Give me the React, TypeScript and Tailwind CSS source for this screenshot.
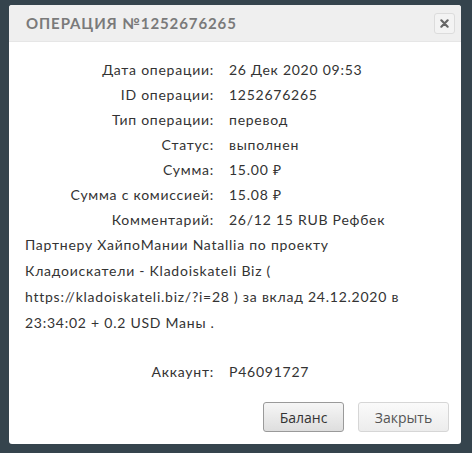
import React from 'react';

const rows: [string, string][] = [
  ['Дата операции:', '26 Дек 2020 09:53'],
  ['ID операции:', '1252676265'],
  ['Тип операции:', 'перевод'],
  ['Статус:', 'выполнен'],
  ['Сумма:', '15.00 ₽'],
  ['Сумма с комиссией:', '15.08 ₽'],
  ['Комментарий:', '26/12 15 RUB Рефбек'],
];

const App: React.FC = () => {
  return (
    <div className="w-[472px] h-[453px] bg-[#35444d] pt-[5px] pl-[9px] font-['Lato','Open_Sans',sans-serif]">
      <div className="w-[452px] h-[439px] bg-white rounded-[3px] flex flex-col overflow-hidden">
        {/* header */}
        <div className="h-[37px] bg-[#efefef] flex items-center justify-between pl-[17px] pr-[6px] border-b border-[#e6e6e6]">
          <h2 className="text-[15px] font-bold tracking-[0.9px] text-[#7a7a7a]">ОПЕРАЦИЯ №1252676265</h2>
          <button className="w-[21px] h-[21px] rounded-[3px] border border-[#dcdcdc] bg-[#f3f3f3] flex items-center justify-center">
            <svg width="9" height="9" viewBox="0 0 10 10">
              <path d="M1.5 1.5L8.5 8.5M8.5 1.5L1.5 8.5" stroke="#666" strokeWidth="2.4" strokeLinecap="round" />
            </svg>
          </button>
        </div>

        {/* details */}
        <div className="flex flex-col pt-[15px] text-[14px] tracking-[0.75px] text-[#333]">
          {rows.map(([label, value]) => (
            <div key={label} className="flex h-[25px] items-center">
              <div className="w-[205px] text-right">{label}</div>
              <div className="pl-[15px]">{value}</div>
            </div>
          ))}
          <p className="px-[16px] leading-[26px] whitespace-nowrap">
            Партнеру ХайпоМании Natallia по проекту
            <br />
            Кладоискатели - Kladoiskateli Biz (
            <br />
            https://kladoiskateli.biz/?i=28 ) за вклад 24.12.2020 в
            <br />
            23:34:02 + 0.2 USD Маны .
          </p>
          <div className="flex h-[25px] items-center mt-[23px]">
            <div className="w-[205px] text-right">Аккаунт:</div>
            <div className="pl-[15px]">P46091727</div>
          </div>
        </div>

        {/* footer */}
        <div className="flex justify-end gap-[14px] pr-[12px] mt-[18px] font-['Open_Sans',sans-serif] text-[14px]">
          <button className="w-[81px] h-[30px] rounded-[3px] border border-[#9a9a9a] bg-gradient-to-b from-[#f6f6f6] to-[#dedede] text-[#333]">
            Баланс
          </button>
          <button className="w-[91px] h-[30px] rounded-[3px] border border-[#d6d6d6] bg-gradient-to-b from-[#fafafa] to-[#ececec] text-[#555]">
            Закрыть
          </button>
        </div>
      </div>
    </div>
  );
};

export default App;
